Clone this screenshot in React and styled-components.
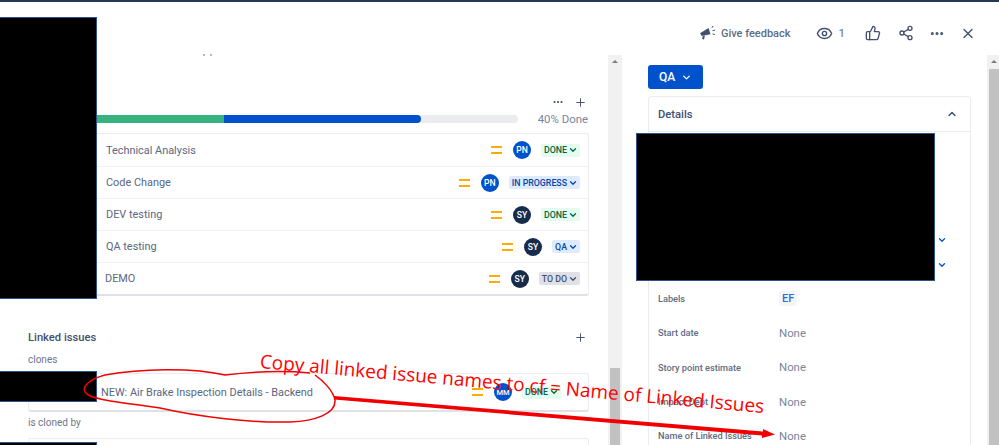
import React from "react";
import styled, { createGlobalStyle } from "styled-components";
import { Eye, ThumbsUp, Share2, MoreHorizontal, X, Plus, ChevronDown, ChevronUp } from "lucide-react";

const Global = createGlobalStyle`
  html, body { margin: 0; padding: 0; background: #fff; }
  body { font-family: Roboto, "Noto Sans", sans-serif; }
`;

const Page = styled.div`
  position: relative;
  width: 999px;
  height: 445px;
  overflow: hidden;
  background: #fff;
  display: flex;
  flex-direction: column;
`;
const TopLine = styled.div`
  height: 2px;
  flex: none;
  background: #253858;
`;
const Header = styled.header`
  height: 53px;
  flex: none;
  display: flex;
  justify-content: space-between;
  padding: 0 23px 0 203px;
`;
const CutDots = styled.div`
  align-self: flex-end;
  display: flex;
  gap: 5px;
  margin-bottom: -1px;
`;
const CutDot = styled.i`
  width: 2px;
  height: 2px;
  background: #b3bac8;
`;
const Actions = styled.div`
  display: flex;
  align-items: center;
  color: #42526e;
  padding-top: 9px;
`;
const Feedback = styled.span`
  display: flex;
  align-items: center;
  gap: 5px;
  font-size: 11px;
  font-weight: 500;
  color: #5e6c84;
  margin-right: 25px;
`;
const Watchers = styled.span`
  display: flex;
  align-items: center;
  gap: 6px;
  font-size: 11.5px;
  color: #5e6c84;
  margin-right: 20px;
`;
const ActionSlot = styled.span`
  display: flex;
  width: ${(p) => p.$w}px;
  margin-right: ${(p) => p.$mr || 0}px;
  justify-content: center;
`;
const Main = styled.div`
  flex: 1;
  min-height: 0;
  display: flex;
`;
const LeftColumn = styled.section`
  width: 608px;
  flex: none;
  box-sizing: border-box;
  padding: 40px 19px 0 28px;
`;
const Track = styled.div`
  width: ${(p) => p.$w}px;
  flex: none;
  background: #f1f1f1;
  display: flex;
  flex-direction: column;
  align-items: flex-end;
`;
const ScrollArrow = styled.i`
  width: 0;
  height: 0;
  margin: 5px ${(p) => p.$mr}px 0 0;
  border-left: 3px solid transparent;
  border-right: 3px solid transparent;
  border-bottom: 3px solid #7d7d7d;
`;
const Thumb = styled.div`
  width: ${(p) => p.$w}px;
  margin-top: ${(p) => p.$top}px;
  margin-right: ${(p) => p.$mr}px;
  flex: 1;
  background: #c1c1c1;
`;
const ProgressTools = styled.div`
  height: 14px;
  display: flex;
  justify-content: flex-end;
  align-items: center;
  gap: 10px;
  color: #42526e;
  padding-right: 2px;
`;
const ProgressRow = styled.div`
  height: 24px;
  display: flex;
  align-items: center;
  justify-content: space-between;
`;
const Bar = styled.div`
  width: 490px;
  height: 8px;
  border-radius: 4px;
  background: #ebecf0;
  overflow: hidden;
  display: flex;
  margin-top: -4px;
`;
const BarPart = styled.div`
  height: 100%;
  width: ${(p) => p.$w}px;
  background: ${(p) => p.$c};
  border-radius: ${(p) => (p.$end ? "0 4px 4px 0" : "0")};
`;
const DoneText = styled.span`
  font-size: 11.4px;
  color: #7a869a;
  margin: 0 1px 5px 0;
`;
const Card = styled.div`
  border: 1px solid #ebecf0;
  border-bottom: 2px solid #dfe1e6;
  border-radius: 3px;
  background: #fff;
`;
const Row = styled.div`
  height: ${(p) => p.$h || 32}px;
  box-sizing: border-box;
  display: flex;
  align-items: center;
  gap: 10px;
  padding: 0 ${(p) => p.$pr || 8}px 0 ${(p) => p.$pl || 77}px;
  border-top: ${(p) => (p.$first ? "none" : "1px solid #f1f2f5")};
`;
const RowTitle = styled.span`
  flex: 1;
  font-size: 10.9px;
  color: #5a6781;
  white-space: nowrap;
`;
const Priority = styled.span`
  width: 11px;
  height: 8px;
  box-sizing: border-box;
  border-top: 2px solid #ffab00;
  border-bottom: 2px solid #ffab00;
  margin-right: 1px;
`;
const Avatar = styled.span`
  width: 18px;
  height: 18px;
  border-radius: 50%;
  background: ${(p) => p.$c};
  color: #fff;
  font-size: ${(p) => p.$fs || 8.6}px;
  font-weight: 500;
  display: flex;
  align-items: center;
  justify-content: center;
`;
const LOZENGE = {
  done: ["#e3fcef", "#006644"],
  progress: ["#deebff", "#0747a6"],
  todo: ["#dfe1e6", "#42526e"],
};
const Lozenge = styled.span`
  display: flex;
  align-items: center;
  height: 13px;
  padding: 0 2px 0 3px;
  gap: 1px;
  border-radius: 2px;
  font-size: 8.8px;
  font-weight: 500;
  background: ${(p) => LOZENGE[p.$k][0]};
  color: ${(p) => LOZENGE[p.$k][1]};
`;
const LinkedHead = styled.div`
  margin-top: 34px;
  height: 14px;
  display: flex;
  justify-content: space-between;
  align-items: center;
  color: #42526e;
  padding-right: 2px;
`;
const LinkedTitle = styled.h3`
  margin: 0;
  font-size: 11.2px;
  font-weight: 500;
  color: #42526e;
`;
const Relation = styled.div`
  font-size: 10px;
  color: #6b778c;
  line-height: 14px;
  margin: ${(p) => p.$m};
`;
const RightColumn = styled.aside`
  flex: 1;
  min-width: 0;
  box-sizing: border-box;
  padding: 10px 16px 0 26px;
`;
const StatusButton = styled.button`
  width: 55px;
  height: 24px;
  border: none;
  border-radius: 3px;
  background: #0052cc;
  color: #fff;
  font: 500 12px Roboto, sans-serif;
  display: flex;
  align-items: center;
  justify-content: center;
  gap: 6px;
  padding: 0;
`;
const Panel = styled.div`
  margin-top: 7px;
  border: 1.5px solid #ebecf0;
  border-radius: 3px;
  height: 400px;
`;
const PanelHead = styled.div`
  height: 35px;
  box-sizing: border-box;
  display: flex;
  align-items: center;
  justify-content: space-between;
  padding: 0 12px 0 9px;
  border-bottom: 1.5px solid #ebecf0;
  color: #42526e;
`;
const PanelTitle = styled.span`
  font-size: 11.2px;
  font-weight: 500;
`;
const HiddenFields = styled.div`
  height: 149.5px;
  box-sizing: border-box;
  padding: 103px 23px 0 0;
  display: flex;
  flex-direction: column;
  align-items: flex-end;
  gap: 15px;
  color: #0052cc;
`;
const Field = styled.div`
  height: 34.3px;
  display: grid;
  grid-template-columns: 121px 1fr;
  align-items: center;
  padding-left: 9px;
`;
const FieldLabel = styled.span`
  font-size: 9.2px;
  font-weight: 500;
  color: #5e6c84;
`;
const FieldValue = styled.span`
  font-size: 11.4px;
  color: #7a869a;
`;
const Tag = styled.span`
  justify-self: start;
  font-size: 11px;
  font-weight: 500;
  color: #2f6fd6;
  background: #f4f5f7;
  border-radius: 2px;
  padding: 0 3px;
  line-height: 15px;
`;
const Redaction = styled.div`
  position: absolute;
  left: ${(p) => p.$x}px;
  top: ${(p) => p.$y}px;
  width: ${(p) => p.$w}px;
  height: ${(p) => p.$h}px;
  background: #000;
  border: 1px solid #2f528f;
  box-sizing: border-box;
`;
const Markup = styled.svg`
  position: absolute;
  left: 0;
  top: 0;
  width: 999px;
  height: 445px;
  pointer-events: none;
`;
const Note = styled.div`
  position: absolute;
  left: 260px;
  top: 347.5px;
  font-family: "Open Sans", sans-serif;
  font-size: 19px;
  color: #ff0000;
  white-space: nowrap;
  transform-origin: 0 50%;
  transform: rotate(5.1deg);
`;

const Megaphone = () => (
  <svg width="17" height="16" viewBox="0 0 17 16" fill="#42526e">
    <path d="M1 8.2 9.6 3l1.9 6.3-8.7 1.6z" />
    <path d="M3.7 11.2l2.2-.4-.9 3.8-1.9-.5z" />
    <path d="M12.4 2.2l1.6-1.4.6.7-1.6 1.4zM13.3 5.4l2.5-.8.3.9-2.5.8zM13.6 8.4l2.4.6-.2.9-2.4-.6z" />
  </svg>
);

const tasks = [
  { t: "Technical Analysis", a: "PN", c: "#0052cc", k: "done", s: "DONE" },
  { t: "Code Change", a: "PN", c: "#0052cc", k: "progress", s: "IN PROGRESS" },
  { t: "DEV testing", a: "SY", c: "#172b4d", k: "done", s: "DONE" },
  { t: "QA testing", a: "SY", c: "#172b4d", k: "progress", s: "QA" },
  { t: "DEMO", a: "SY", c: "#172b4d", k: "todo", s: "TO DO", pl: 76 },
];

export default function App() {
  return (
    <Page>
      <Global />
      <TopLine />
      <Header>
        <CutDots>
          <CutDot />
          <CutDot />
        </CutDots>
        <Actions>
          <Feedback>
            <Megaphone />
            Give feedback
          </Feedback>
          <Watchers>
            <Eye size={17} strokeWidth={2} color="#42526e" />1
          </Watchers>
          <ActionSlot $w={16} $mr={17}>
            <ThumbsUp size={16} strokeWidth={2} />
          </ActionSlot>
          <ActionSlot $w={16} $mr={15}>
            <Share2 size={16} strokeWidth={2} />
          </ActionSlot>
          <ActionSlot $w={16} $mr={15}>
            <MoreHorizontal size={17} strokeWidth={2.6} />
          </ActionSlot>
          <ActionSlot $w={16}>
            <X size={17} strokeWidth={2} />
          </ActionSlot>
        </Actions>
      </Header>
      <Main>
        <LeftColumn>
          <ProgressTools>
            <MoreHorizontal size={12} strokeWidth={2.4} />
            <Plus size={13} strokeWidth={1.8} />
          </ProgressTools>
          <ProgressRow>
            <Bar>
              <BarPart $w={196} $c="#36b37e" />
              <BarPart $w={197} $c="#0052cc" $end />
            </Bar>
            <DoneText>40% Done</DoneText>
          </ProgressRow>
          <Card>
            {tasks.map((r, i) => (
              <Row key={r.t} $first={i === 0} $pl={r.pl}>
                <RowTitle>{r.t}</RowTitle>
                <Priority />
                <Avatar $c={r.c}>{r.a}</Avatar>
                <Lozenge $k={r.k}>
                  {r.s}
                  <ChevronDown size={10} strokeWidth={3} />
                </Lozenge>
              </Row>
            ))}
          </Card>
          <LinkedHead>
            <LinkedTitle>Linked issues</LinkedTitle>
            <Plus size={13} strokeWidth={1.8} />
          </LinkedHead>
          <Relation $m="9px 0 6px">clones</Relation>
          <Card>
            <Row $first $h={36} $pl={72} $pr={27}>
              <RowTitle>NEW: Air Brake Inspection Details - Backend</RowTitle>
              <Priority />
              <Avatar $c="#0052cc" $fs={7.5}>MM</Avatar>
              <Lozenge $k="done">
                DONE
                <ChevronDown size={10} strokeWidth={3} />
              </Lozenge>
            </Row>
          </Card>
          <Relation $m="4px 0 8px">is cloned by</Relation>
          <Card>
            <Row $first $h={36} />
          </Card>
        </LeftColumn>
        <Track $w={14}>
          <ScrollArrow $mr={4} />
          <Thumb $w={10} $top={305} $mr={2} />
        </Track>
        <RightColumn>
          <StatusButton>
            QA
            <ChevronDown size={11} strokeWidth={3} />
          </StatusButton>
          <Panel>
            <PanelHead>
              <PanelTitle>Details</PanelTitle>
              <ChevronUp size={12} strokeWidth={3} />
            </PanelHead>
            <HiddenFields>
              <ChevronDown size={10} strokeWidth={3} />
              <ChevronDown size={10} strokeWidth={3} />
            </HiddenFields>
            <Field>
              <FieldLabel>Labels</FieldLabel>
              <Tag>EF</Tag>
            </Field>
            <Field>
              <FieldLabel>Start date</FieldLabel>
              <FieldValue>None</FieldValue>
            </Field>
            <Field>
              <FieldLabel>Story point estimate</FieldLabel>
              <FieldValue>None</FieldValue>
            </Field>
            <Field>
              <FieldLabel>Impact Dept</FieldLabel>
              <FieldValue>None</FieldValue>
            </Field>
            <Field>
              <FieldLabel>Name of Linked Issues</FieldLabel>
              <FieldValue>None</FieldValue>
            </Field>
          </Panel>
        </RightColumn>
        <Track $w={12}>
          <ScrollArrow $mr={2} />
          <Thumb $w={10} $top={6} $mr={0} />
        </Track>
      </Main>
      <Redaction $x={-1} $y={17} $w={98} $h={282} />
      <Redaction $x={-1} $y={371} $w={98} $h={31} />
      <Redaction $x={-1} $y={442} $w={98} $h={10} />
      <Redaction $x={636} $y={133} $w={299} $h={148} />
      <Markup viewBox="0 0 999 445">
        <path
          d="M310 373C280 370 250 372 225 375C190 367 140 369 105 375C90 379 82 386 85 392C90 400 120 402 160 408C200 417 250 423 290 422C315 421 336 414 335 400C333 390 322 380 315 375"
          fill="none"
          stroke="#f00000"
          strokeWidth="1.5"
        />
        <path d="M334 396L763 431.5L763 429L775 434.5L762 438L762 435.5L334 399.5Z" fill="#f00000" />
      </Markup>
      <Note>Copy all linked issue names to cf = Name of Linked Issues</Note>
    </Page>
  );
}
